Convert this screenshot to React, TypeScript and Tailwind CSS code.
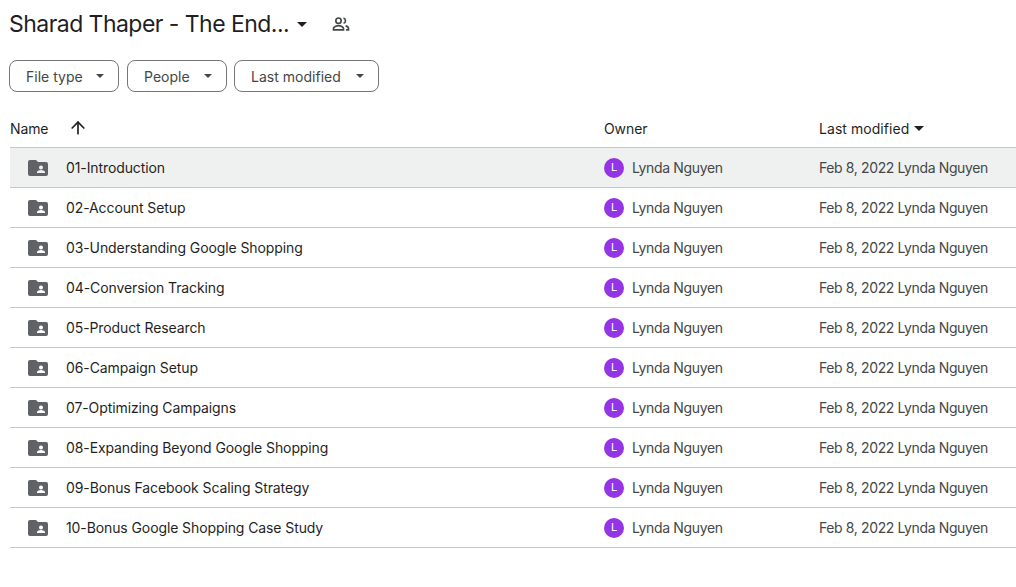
import { ArrowUp } from "lucide-react";

const folders = [
  "01-Introduction",
  "02-Account Setup",
  "03-Understanding Google Shopping",
  "04-Conversion Tracking",
  "05-Product Research",
  "06-Campaign Setup",
  "07-Optimizing Campaigns",
  "08-Expanding Beyond Google Shopping",
  "09-Bonus Facebook Scaling Strategy",
  "10-Bonus Google Shopping Case Study",
];

const Caret = ({ className }: { className: string }) => (
  <svg viewBox="0 0 10 5" className={className} fill="currentColor">
    <path d="M0 0l5 5 5-5z" />
  </svg>
);

const SharedFolder = () => (
  <svg viewBox="0 0 20 16" className="w-[20px] h-[16px] text-[#5f6368]" fill="currentColor">
    <path
      fillRule="evenodd"
      d="M2 0h6l2 2h8a2 2 0 0 1 2 2v10a2 2 0 0 1-2 2H2a2 2 0 0 1-2-2V2a2 2 0 0 1 2-2zm11 5.500a2 2 0 1 0 0 4 2 2 0 0 0 0-4zM9 13h8v-1c0-1.300-2.700-2-4-2s-4 .7-4 2z"
    />
  </svg>
);

const PeopleIcon = () => (
  <svg viewBox="0 0 24 24" className="w-[20px] h-[20px] text-[#444746]" fill="none" stroke="currentColor" strokeWidth="2">
    <circle cx="9" cy="8" r="3.2" />
    <path d="M3 19v-1.500C3 15.500 6.500 14 9 14s6 1.500 6 3.500V19z" />
    <path d="M15 4.900a3.200 3.200 0 0 1 0 6.200M17.500 14.300c2 .5 3.500 1.700 3.500 3.200V19h-3" />
  </svg>
);

const Chip = ({ label, className }: { label: string; className: string }) => (
  <button className={`h-[32px] flex items-center justify-between pl-[16px] pr-[14px] border border-[#747775] rounded-[8px] text-[14px] tracking-[0.02px] text-[#444746] ${className}`}>
    <span>{label}</span>
    <Caret className="w-[8px] h-[4px] text-[#444746]" />
  </button>
);

export default function App() {
  return (
    <div className="w-[1016px] h-[587px] bg-white overflow-hidden font-['Inter',sans-serif] tracking-[-0.1px]">
      <div className="h-[60px] pl-[9px] pt-[8px] flex items-start">
        <h1 className="text-[23px] leading-[32px] tracking-[-0.54px] text-[#1f1f1f] w-[280px] whitespace-nowrap">Sharad Thaper - The End...</h1>
        <Caret className="w-[10px] h-[5px] ml-[8px] mt-[14px] text-[#1f1f1f]" />
        <div className="ml-[24px] mt-[6px]">
          <PeopleIcon />
        </div>
      </div>

      <div className="flex pl-[9px]">
        <Chip label="File type" className="w-[110px]" />
        <Chip label="People" className="w-[100px] ml-[8px]" />
        <Chip label="Last modified" className="w-[145px] ml-[7px]" />
      </div>

      <div className="flex items-center h-[55px] pt-[17px] ml-[10px] text-[14px] text-[#1f1f1f]">
        <div className="w-[594px] flex items-center">
          <span className="w-[58px]">Name</span>
          <ArrowUp className="w-[20px] h-[20px]" strokeWidth={2} />
        </div>
        <div className="w-[215px]">Owner</div>
        <div className="flex items-center gap-[5px] tracking-[0.05px]">
          Last modified
          <Caret className="w-[10px] h-[5px]" />
        </div>
      </div>

      <div className="ml-[10px] border-t border-[#c7c7c7]">
        {folders.map((name, i) => (
          <div key={name} className={`h-[40px] flex items-center border-b border-[#c7c7c7] text-[14px] ${i === 0 ? "bg-[#eff1f1]" : ""}`}>
            <div className="w-[594px] flex items-center pl-[18px] text-[#1f1f1f]">
              <SharedFolder />
              <span className="ml-[18px]">{name}</span>
            </div>
            <div className="w-[215px] flex items-center text-[#444746] tracking-[-0.36px]">
              <span className="w-[20px] h-[20px] rounded-full bg-[#9334e6] text-white text-[11px] flex items-center justify-center">L</span>
              <span className="ml-[8px]">Lynda Nguyen</span>
            </div>
            <div className="text-[#444746] whitespace-nowrap tracking-[-0.38px]">Feb 8, 2022 Lynda Nguyen</div>
          </div>
        ))}
      </div>
    </div>
  );
}
